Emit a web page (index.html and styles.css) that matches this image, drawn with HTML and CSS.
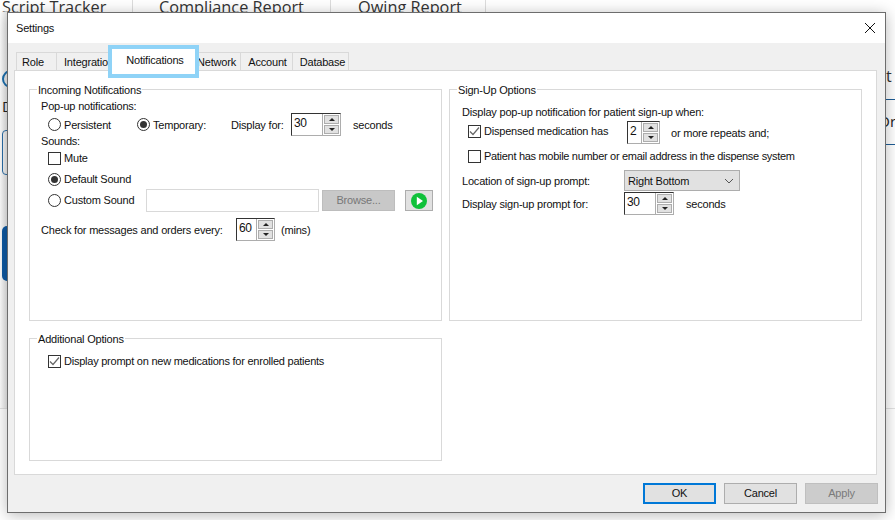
FILE: index.html
```html
<!DOCTYPE html>
<html lang="en">
<head>
<meta charset="utf-8">
<title>Settings</title>
<link rel="stylesheet" href="styles.css">
</head>
<body>
<div class="app">
  <div class="app-tabs">
    <span class="app-tab tab-a">Script Tracker</span>
    <span class="app-tab tab-b">Compliance Report</span>
    <span class="app-tab tab-c">Owing Report</span>
  </div>
  <div class="app-body">
    <div class="strip-left">
      <div class="ring"></div>
      <div class="frag-d">D</div>
      <div class="outline"></div>
      <div class="solid"></div>
    </div>
    <div class="strip-right">
      <div class="frag-t">t</div>
      <div class="frag-dr">Dr</div>
    </div>
  </div>
  <div class="app-rule"></div>
</div>

<section class="dialog">
  <header class="titlebar">
    <span>Settings</span>
    <svg class="close" width="12" height="12" viewBox="0 0 12 12"><path d="M1 1l10 10M11 1L1 11" stroke="#111" stroke-width="1" fill="none"/></svg>
  </header>
  <div class="dialog-body">
    <nav class="tabs">
      <span class="tab t-role">Role</span>
      <span class="tab t-int">Integration</span>
      <span class="tab t-net">Network</span>
      <span class="tab t-acc">Account</span>
      <span class="tab t-db">Database</span>
      <span class="tab-active">Notifications</span>
    </nav>
    <div class="panel">
      <div class="groups">
        <fieldset class="group">
          <legend>Incoming Notifications</legend>
          <div class="line l-popup">Pop-up notifications:</div>
          <div class="row r-persist">
            <span class="opt o-persist"><i class="radio"></i>Persistent</span>
            <span class="opt o-temp"><i class="radio on"></i>Temporary:</span>
            <span class="disp">Display for:</span>
            <span class="spin s-50"><b>30</b><i class="arrows"><u class="up"></u><u class="dn"></u></i></span>
            <span class="after">seconds</span>
          </div>
          <div class="line l-sounds">Sounds:</div>
          <div class="opt o-row o-mute"><i class="check"></i>Mute</div>
          <div class="opt o-row o-def"><i class="radio on"></i>Default Sound</div>
          <div class="row r-custom">
            <span class="opt o-custom"><i class="radio"></i>Custom Sound</span>
            <span class="field"></span>
            <span class="browse">Browse...</span>
            <span class="play"><svg width="16" height="16" viewBox="0 0 16 16"><circle cx="8" cy="8" r="8" fill="#0fc13a"/><path d="M5.8 3.8L12 8l-6.2 4.2z" fill="#fff"/></svg></span>
          </div>
          <div class="row r-check">
            <span class="check-label">Check for messages and orders every:</span>
            <span class="spin s-39"><b>60</b><i class="arrows"><u class="up"></u><u class="dn"></u></i></span>
            <span class="after-m">(mins)</span>
          </div>
        </fieldset>
        <fieldset class="group group-right">
          <legend>Sign-Up Options</legend>
          <div class="line l-display">Display pop-up notification for patient sign-up when:</div>
          <div class="row r-disp">
            <span class="opt o-disp"><i class="check on"><svg width="13" height="13" viewBox="0 0 13 13"><path d="M2 6.5l3 3 6-7" stroke="#666" stroke-width="1.2" fill="none"/></svg></i>Dispensed medication has</span>
            <span class="spin s-33"><b>2</b><i class="arrows"><u class="up"></u><u class="dn"></u></i></span>
            <span class="after-r">or more repeats and;</span>
          </div>
          <div class="opt o-row o-mobile"><i class="check"></i>Patient has mobile number or email address in the dispense system</div>
          <div class="row r-loc">
            <span class="lbl">Location of sign-up prompt:</span>
            <span class="select">Right Bottom<svg width="10" height="6" viewBox="0 0 10 6"><path d="M1 1l4 4 4-4" stroke="#555" fill="none"/></svg></span>
          </div>
          <div class="row r-for">
            <span class="lbl">Display sign-up prompt for:</span>
            <span class="spin s-50"><b>30</b><i class="arrows"><u class="up"></u><u class="dn"></u></i></span>
            <span class="after">seconds</span>
          </div>
        </fieldset>
        <fieldset class="group group-add">
          <legend>Additional Options</legend>
          <div class="opt o-row o-prompt"><i class="check on"><svg width="13" height="13" viewBox="0 0 13 13"><path d="M2 6.5l3 3 6-7" stroke="#666" stroke-width="1.2" fill="none"/></svg></i>Display prompt on new medications for enrolled patients</div>
        </fieldset>
      </div>
    </div>
    <footer class="buttons">
      <span class="btn btn-ok">OK</span>
      <span class="btn">Cancel</span>
      <span class="btn btn-off">Apply</span>
    </footer>
  </div>
</section>
</body>
</html>
```

FILE: styles.css
```css
* { box-sizing: border-box; }
html, body { margin: 0; height: 100%; }
body { width: 895px; height: 520px; overflow: hidden; background: #fff; position: relative; font-family: "Liberation Sans", Arial, sans-serif; font-size: 11px; letter-spacing: -.2px; color: #111; white-space: nowrap; }

.app { height: 520px; display: flex; flex-direction: column; letter-spacing: 0; }
.app-tabs { height: 12px; display: flex; overflow: hidden; font-family: "Open Sans", sans-serif; font-size: 16.3px; line-height: 17px; color: #333; flex: none; }
.app-tab { border-right: 1px solid #ddd; margin-top: -1px; height: 20px; }
.tab-a { width: 133px; padding-left: 2px; }
.tab-b { width: 198px; padding-left: 26px; }
.tab-c { width: 155px; padding-left: 27px; }
.app-body { flex: none; height: 396px; display: flex; justify-content: space-between; }
.app-rule { height: 1px; background: #e2e2e2; flex: none; }
.strip-left { width: 8px; overflow: hidden; background: linear-gradient(90deg, #fff, #e6e6e6); }
.ring { width: 18px; height: 18px; margin: 58px 0 0 2px; border: 2px solid #1b6fae; border-radius: 50%; }
.frag-d { font-family: "Open Sans", sans-serif; font-size: 15px; margin: 9px 0 0 2px; line-height: 18px; color: #222; }
.outline { width: 20px; height: 45px; margin: 15px 0 0 2px; border: 1px solid #2b6ea8; border-radius: 4px; }
.solid { width: 20px; height: 55px; margin: 51px 0 0 2px; background: #0f5aa3; border-radius: 5px; }
.strip-right { width: 10px; overflow: hidden; }
.frag-t { height: 88px; padding: 53px 0 0 1px; border-bottom: 1px solid #1f5d96; font-family: "Open Sans", sans-serif; font-size: 16px; line-height: 22px; color: #333; }
.frag-dr { height: 45px; padding-top: 11px; text-indent: -6px; border-bottom: 1px solid #1f5d96; font-family: "Open Sans", sans-serif; font-size: 15px; line-height: 20px; color: #222; overflow: hidden; }

.dialog { position: absolute; left: 7px; top: 12px; width: 879px; height: 501px; background: #f0f0f0; border: 1px solid #6d6d6d; box-shadow: 0 2px 14px rgba(0,0,0,.28); display: flex; flex-direction: column; }
.titlebar { height: 30px; background: #fff; flex: none; display: flex; align-items: center; justify-content: space-between; padding: 0 9px 0 8px; }
.dialog-body { flex: 1; padding: 9px 8px 0 6px; display: flex; flex-direction: column; }

.tabs { height: 18px; display: flex; flex: none; position: relative; }
.tab { background: #f0f0f0; border: 1px solid #d9d9d9; border-bottom: 0; height: 18px; line-height: 18px; text-align: center; margin-right: -1px; }
.t-role { width: 41px; margin-left: 2px; text-align: left; padding-left: 5px; }
.t-int { width: 60px; overflow: hidden; text-align: left; padding-left: 7px; }
.t-net { width: 45px; margin-left: 81px; padding-right: 4px; }
.t-acc { width: 53px; padding-left: 2px; }
.t-db { width: 57px; padding-left: 4px; }
.tab-active { position: absolute; left: 94px; top: -7px; width: 91px; height: 33px; background: #fff; border: 4px solid #8fd3f7; padding-left: 3px; text-align: center; line-height: 23px; }

.panel { height: 405px; flex: none; background: #fff; border: 1px solid #d9d9d9; padding: 10px 14px 0; }
.groups { display: grid; grid-template-columns: 413px 413px; grid-template-rows: 240px 131px; column-gap: 7px; row-gap: 9px; }
.group { margin: 0; padding: 0 11px; border: 1px solid #d9d9d9; min-width: 0; }
.group-right { padding-left: 12px; }
.group legend { padding: 2px 1px 0; margin-left: -4px; line-height: 15px; }
.group-right legend { margin-left: -5px; }
.group-add { grid-column: 1; }

.row { display: flex; align-items: center; }
.row > * { flex: none; }
.opt { display: flex; align-items: center; }
.radio { width: 13px; height: 13px; border: 1px solid #333; border-radius: 50%; margin-right: 3px; flex: none; display: block; position: relative; }
.radio.on::after { content: ""; position: absolute; left: 2px; top: 2px; width: 7px; height: 7px; border-radius: 50%; background: #333; }
.check { width: 13px; height: 13px; border: 1px solid #333; margin-right: 3px; flex: none; display: block; }
.check svg { display: block; margin: -1px; }

.line { line-height: 14px; }
.l-popup { margin-top: 1px; }
.r-persist { margin-left: 7px; height: 23px; }
.o-persist { width: 89px; }
.o-temp { width: 94px; }
.disp { width: 60px; }
.l-sounds { margin-top: -2px; }
.o-row { height: 14px; }
.o-mute { margin: 3px 0 0 7px; }
.o-def { margin: 7px 0 0 7px; }
.r-custom { margin: 3px 0 0 7px; height: 23px; }
.o-custom { width: 98px; margin-top: -1px; }
.field { width: 173px; height: 23px; background: #fff; border: 1px solid #d9d9d9; }
.browse { width: 73px; height: 21px; margin-left: 3px; background: #c8c8c8; border: 1px solid #bdbdbd; color: #777; text-align: center; line-height: 19px; }
.play { width: 28px; height: 21px; margin-left: 10px; background: #e1e1e1; border: 1px solid #adadad; display: flex; align-items: center; justify-content: center; }
.r-check { margin-top: 6px; height: 23px; }
.check-label { width: 195px; }
.after-m { margin-left: 6px; }
.spin { height: 23px; border: 1px solid #adadad; border-left-color: #333; border-top-color: #333; background: #fff; display: flex; justify-content: space-between; flex: none; }
.spin b { font-weight: 400; font-size: 12px; letter-spacing: -.3px; padding: 3px 0 0 2px; line-height: 13px; }
.arrows { width: 18px; border-left: 1px solid #adadad; padding: 1px; display: flex; flex-direction: column; gap: 1px; }
.arrows u { flex: 1; background: #e1e1e1; border: 1px solid #adadad; display: block; position: relative; }
.arrows u::after { content: ""; position: absolute; left: 4px; border: 3px solid transparent; }
.arrows .up::after { top: 2px; border-bottom-color: #222; border-top-width: 0; }
.arrows .dn::after { bottom: 2px; border-top-color: #222; border-bottom-width: 0; }
.s-50 { width: 50px; }
.s-39 { width: 39px; }
.s-33 { width: 33px; }
.after { margin-left: 12px; }

.l-display { margin-top: 7px; }
.r-disp { margin: 2px 0 0 6px; height: 23px; }
.o-disp { width: 159px; margin-top: -3px; }
.after-r { margin-left: 11px; }
.o-mobile { margin: 5px 0 0 6px; letter-spacing: -.3px; }
.r-loc { margin-top: 7px; height: 21px; }
.lbl { width: 162px; }
.select { width: 116px; height: 21px; background: #e1e1e1; border: 1px solid #adadad; display: flex; align-items: center; justify-content: space-between; padding: 0 5px 0 3px; }
.r-for { margin-top: 1px; height: 23px; }
.o-prompt { margin: 7px 0 0 7px; letter-spacing: -.24px; }

.buttons { flex: 1; display: flex; justify-content: flex-end; gap: 8px; padding-top: 8px; margin-right: -1px; }
.btn { width: 73px; height: 21px; background: #e1e1e1; border: 1px solid #adadad; text-align: center; line-height: 19px; }
.btn-ok { border: 2px solid #0078d7; line-height: 17px; }
.btn-off { background: #cccccc; border-color: #bfbfbf; color: #7a7a7a; }
```
